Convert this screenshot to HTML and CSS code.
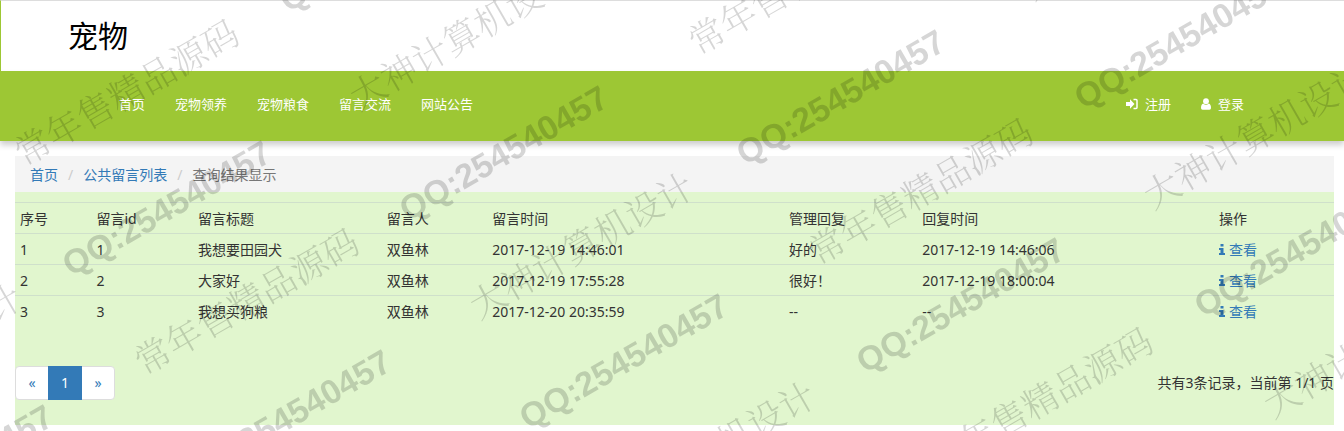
FILE: index.html
```html
<!DOCTYPE html>
<html lang="zh">
<head>
<meta charset="UTF-8">
<title>公共留言列表</title>
<link rel="stylesheet" href="styles.css">
</head>
<body>
    <header class="header">
        <h1 class="logo">宠物</h1>
    </header>
    <!-- 导航栏 -->
    <nav class="navbar">
        <ul class="nav">
            <li><a href="#">首页</a></li>
            <li><a href="#">宠物领养</a></li>
            <li><a href="#">宠物粮食</a></li>
            <li><a href="#">留言交流</a></li>
            <li><a href="#">网站公告</a></li>
        </ul>
        <ul class="nav">
            <li><a href="#"><svg class="icon-sign" viewBox="0 0 12 12"><path d="M0 4h4V1.2L8.5 6 4 10.8V8H0z"/><path class="line" d="M7.5 1.5H10a1 1 0 0 1 1 1v7a1 1 0 0 1-1 1H7.5"/></svg>注册</a></li>
            <li><a href="#"><svg class="icon-user" viewBox="0 0 10 12"><circle cx="5" cy="3.2" r="2.9"/><path d="M2.3 5.5Q5 8 7.7 5.5 10 6 10 10q0 1.8-1.6 1.8H1.6Q0 11.8 0 10 0 6 2.3 5.5z"/></svg>登录</a></li>
        </ul>
    </nav>
    <!-- 留言列表 -->
    <main class="container">
        <ol class="breadcrumb">
            <li><a href="#">首页</a></li>
            <li><a href="#">公共留言列表</a></li>
            <li class="active">查询结果显示</li>
        </ol>
        <div class="panel">
            <table class="table">
                <colgroup>
                    <col class="col-no"><col class="col-id"><col class="col-title"><col class="col-user">
                    <col class="col-time"><col class="col-reply"><col class="col-time"><col>
                </colgroup>
                <thead>
                    <tr><th>序号</th><th>留言id</th><th>留言标题</th><th>留言人</th><th>留言时间</th><th>管理回复</th><th>回复时间</th><th>操作</th></tr>
                </thead>
                <tbody>
                    <tr>
                        <td>1</td><td>1</td><td>我想要田园犬</td><td>双鱼林</td><td>2017-12-19 14:46:01</td><td>好的</td><td>2017-12-19 14:46:06</td>
                        <td><a href="#"><svg class="icon-info" viewBox="0 0 6 11"><path d="M1.5 0h3v2.5h-3zM0 4h4.5v5H6v2H0V9h1.5V6H0z"/></svg>查看</a></td>
                    </tr>
                    <tr>
                        <td>2</td><td>2</td><td>大家好</td><td>双鱼林</td><td>2017-12-19 17:55:28</td><td>很好！</td><td>2017-12-19 18:00:04</td>
                        <td><a href="#"><svg class="icon-info" viewBox="0 0 6 11"><path d="M1.5 0h3v2.5h-3zM0 4h4.5v5H6v2H0V9h1.5V6H0z"/></svg>查看</a></td>
                    </tr>
                    <tr>
                        <td>3</td><td>3</td><td>我想买狗粮</td><td>双鱼林</td><td>2017-12-20 20:35:59</td><td>--</td><td>--</td>
                        <td><a href="#"><svg class="icon-info" viewBox="0 0 6 11"><path d="M1.5 0h3v2.5h-3zM0 4h4.5v5H6v2H0V9h1.5V6H0z"/></svg>查看</a></td>
                    </tr>
                </tbody>
            </table>
            <div class="page-row">
                <ul class="pagination">
                    <li><a href="#">«</a></li>
                    <li class="active"><a href="#">1</a></li>
                    <li><a href="#">»</a></li>
                </ul>
                <div class="page-info">共有3条记录，当前第 1/1 页</div>
            </div>
        </div>
    </main>
    <!-- 水印 -->
    <svg class="watermark" aria-hidden="true">
        <g class="mark-cn">
            <text transform="translate(24 167) rotate(-30)">常年售精品源码</text>
            <text transform="translate(698 56) rotate(-30)">常年售精品源码</text>
            <text transform="translate(144 376) rotate(-30)">常年售精品源码</text>
            <text transform="translate(818 266) rotate(-30)">常年售精品源码</text>
            <text transform="translate(938 475) rotate(-30)">常年售精品源码</text>
            <text transform="translate(359 111) rotate(-30)">大神计算机设计</text>
            <text transform="translate(1033 1) rotate(-30)">大神计算机设计</text>
            <text transform="translate(479 320) rotate(-30)">大神计算机设计</text>
            <text transform="translate(1153 210) rotate(-30)">大神计算机设计</text>
            <text transform="translate(-193 431) rotate(-30)">大神计算机设计</text>
            <text transform="translate(601 529) rotate(-30)">大神计算机设计</text>
            <text transform="translate(1273 419) rotate(-30)">大神计算机设计</text>
        </g>
        <g class="mark-qq">
            <text transform="translate(71 277) rotate(-30)">QQ:254540457</text>
            <text transform="translate(408 222) rotate(-30)">QQ:254540457</text>
            <text transform="translate(745 166) rotate(-30)">QQ:254540457</text>
            <text transform="translate(1083 110) rotate(-30)">QQ:254540457</text>
            <text transform="translate(288 13) rotate(-30)">QQ:254540457</text>
            <text transform="translate(-147 541) rotate(-30)">QQ:254540457</text>
            <text transform="translate(191 486) rotate(-30)">QQ:254540457</text>
            <text transform="translate(528 430) rotate(-30)">QQ:254540457</text>
            <text transform="translate(865 374) rotate(-30)">QQ:254540457</text>
            <text transform="translate(1203 318) rotate(-30)">QQ:254540457</text>
        </g>
    </svg>
</body>
</html>
```
FILE: styles.css
```css
* {
    box-sizing: border-box;
}
body {
    font-family: "Noto Sans", "Noto Sans CJK SC", sans-serif;
    font-size: 14px;
    line-height: 20px;
    margin: 0;
    color: #333;
    background-color: #fff;
}
ul, ol {
    list-style: none;
    margin: 0;
    padding: 0;
}
a {
    color: #337ab7;
    text-decoration: none;
}
svg {
    fill: currentColor;
}
.header {
    border-top: 1px solid #ddd;
    border-left: 1px solid #9dc734;
    padding: 15px 67px;
}
.logo {
    margin: 0;
    font-size: 30px;
    font-weight: normal;
    line-height: 40px;
    color: #000;
}
.navbar {
    display: flex;
    justify-content: space-between;
    padding: 23px 85px 27px 104px;
    background-color: #9dc734;
    box-shadow: 0 4px 6px rgba(0, 0, 0, 0.2);
}
.nav {
    display: flex;
}
.nav a {
    display: flex;
    align-items: center;
    padding: 0 15px;
    font-size: 13px;
    line-height: 20px;
    color: #fff;
}
.icon-sign {
    width: 12px;
    height: 12px;
    margin-right: 7px;
}
.icon-sign .line {
    fill: none;
    stroke: currentColor;
    stroke-width: 1.5;
}
.icon-user {
    width: 10px;
    height: 12px;
    margin-right: 7px;
}
.icon-info {
    width: 6px;
    height: 11px;
    margin-right: 4px;
}
.container {
    margin: 15px 10px 6px 15px;
}
/* 面包屑 */
.breadcrumb {
    display: flex;
    padding: 9px 15px 7px;
    background-color: #f4f4f4;
}
.breadcrumb li + li::before {
    content: "/";
    padding: 0 10px;
    color: #ccc;
}
.breadcrumb .active {
    color: #777;
}
.panel {
    padding: 10px 0 25px;
    background-color: #e1f6ce;
}
.table {
    width: 100%;
    table-layout: fixed;
    border-collapse: collapse;
}
.table th, .table td {
    padding: 6px 5px 4px;
    border-top: 1px solid #cfe0cb;
    font-weight: normal;
    text-align: left;
}
.col-no {
    width: 5.8%;
}
.col-id {
    width: 7.7%;
}
.col-title {
    width: 14.3%;
}
.col-user {
    width: 8%;
}
.col-time {
    width: 22.5%;
}
.col-reply {
    width: 10.1%;
}
.page-row {
    display: flex;
    justify-content: space-between;
    align-items: center;
    margin-top: 40px;
}
/* 分页 */
.pagination {
    display: flex;
}
.pagination a {
    display: block;
    min-width: 34px;
    padding: 6px 0;
    margin-left: -1px;
    border: 1px solid #ddd;
    background-color: #fff;
    text-align: center;
}
.pagination li:first-child a {
    margin-left: 0;
    border-radius: 4px 0 0 4px;
}
.pagination li:last-child a {
    border-radius: 0 4px 4px 0;
}
.pagination .active a {
    position: relative;
    color: #fff;
    background-color: #337ab7;
    border-color: #337ab7;
}
.watermark {
    position: fixed;
    top: 0;
    left: 0;
    width: 100%;
    height: 100%;
    pointer-events: none;
    fill: #000;
    opacity: 0.16;
}
.mark-cn {
    font-family: "Noto Serif CJK SC", "Noto Sans CJK SC", serif;
    font-size: 36px;
    font-weight: 300;
}
.mark-qq {
    font-family: "Liberation Sans", Arial, sans-serif;
    font-size: 34px;
    font-weight: bold;
}
```
